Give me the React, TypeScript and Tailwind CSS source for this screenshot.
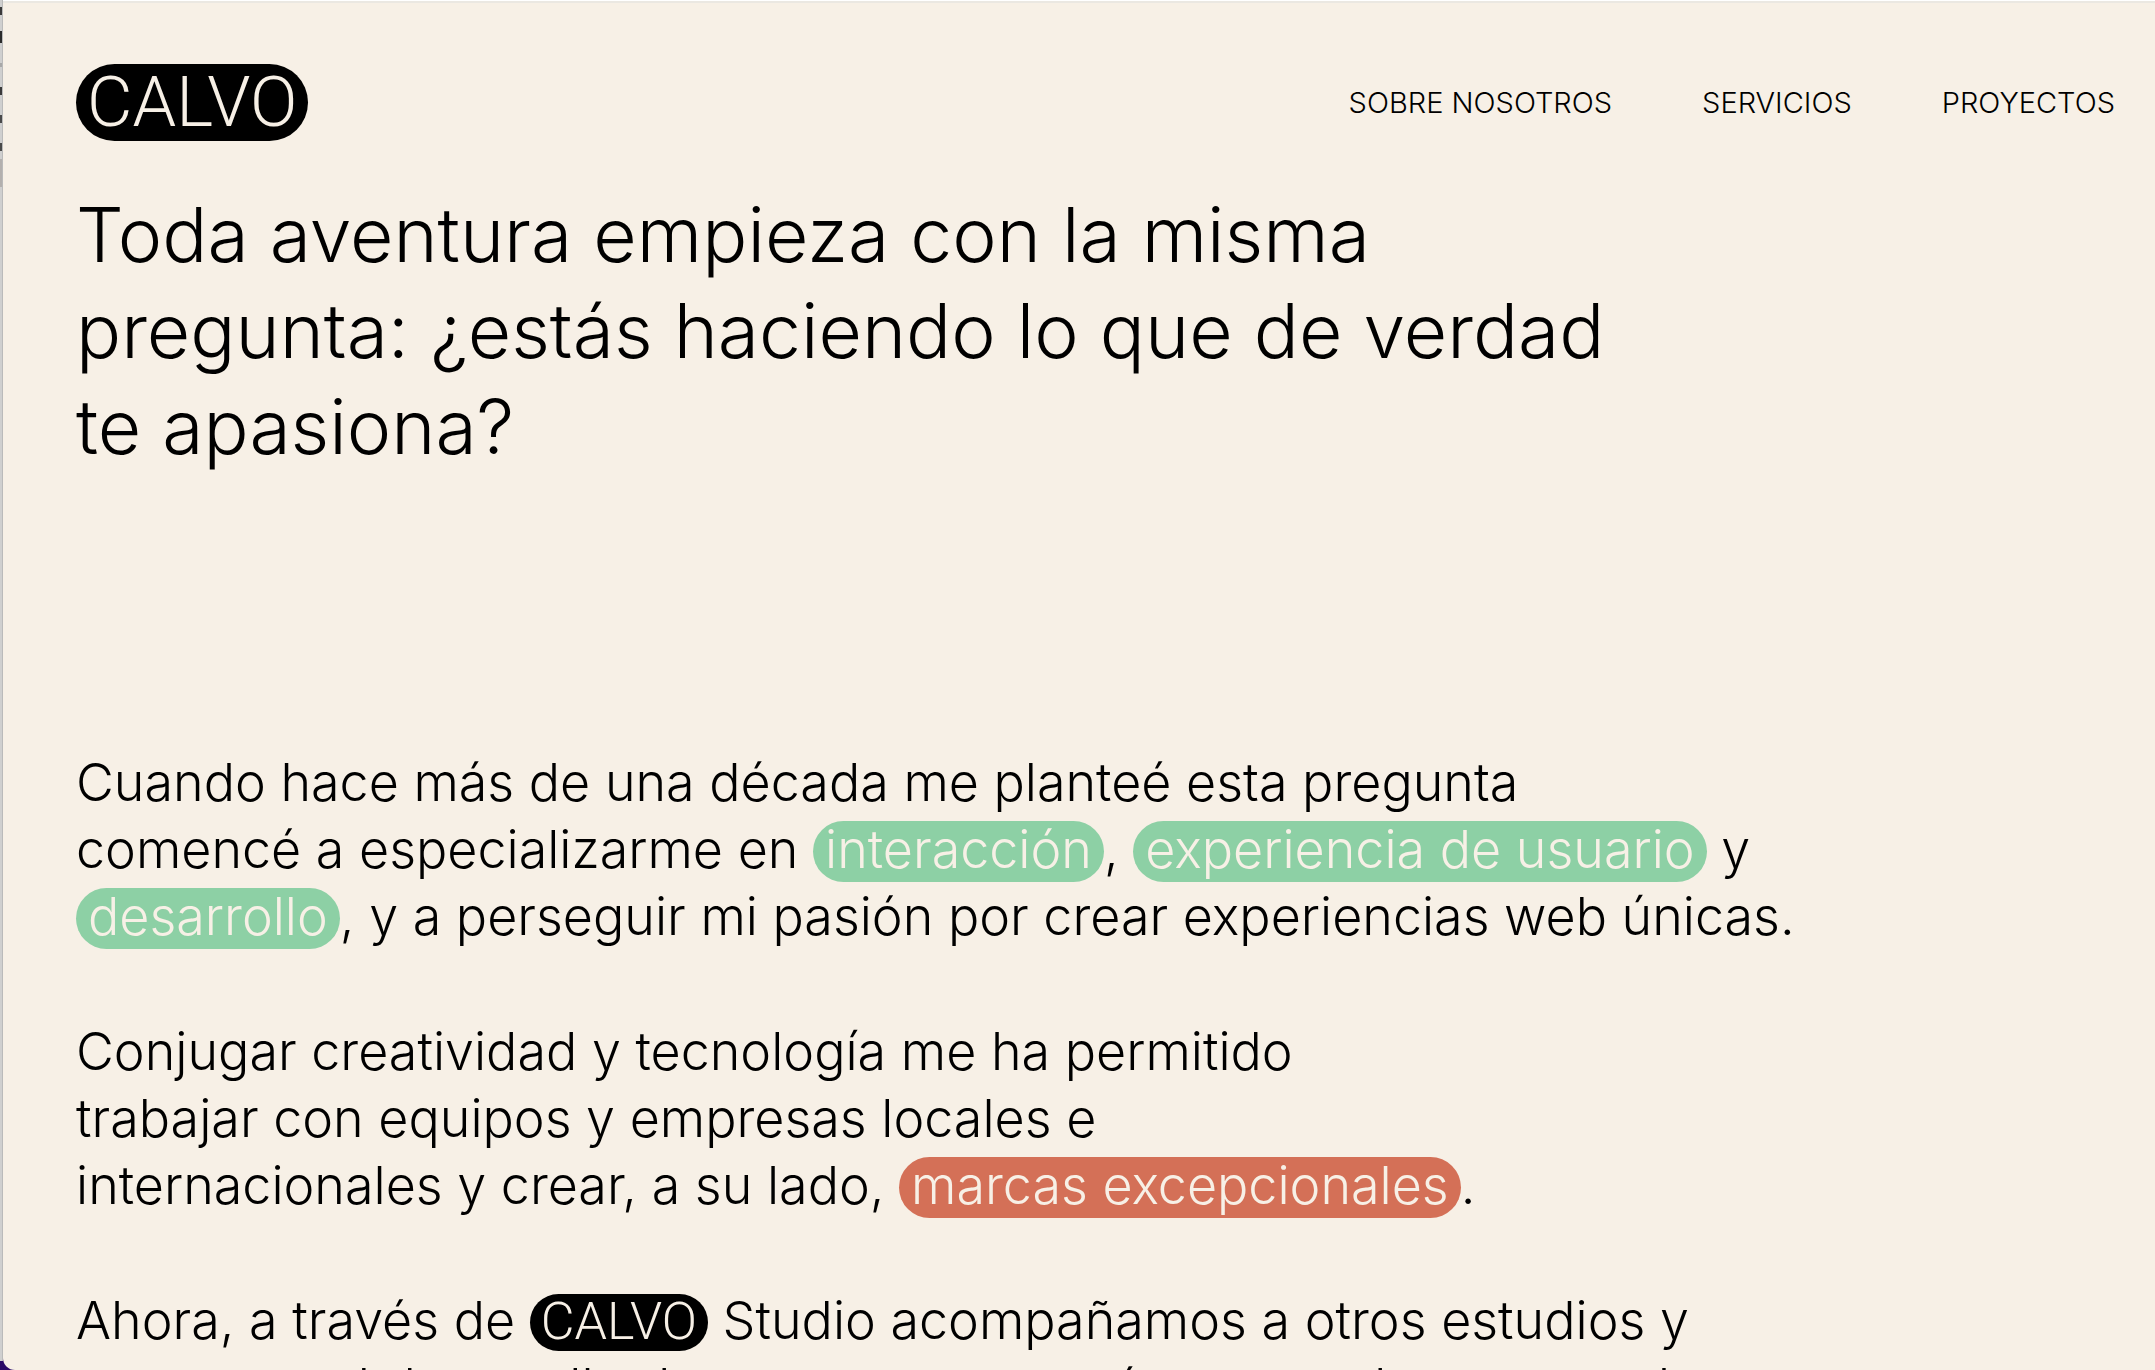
import type { ReactNode } from "react";

const links = [
  { label: "SOBRE NOSOTROS", href: "#sobre-nosotros" },
  { label: "SERVICIOS", href: "#servicios" },
  { label: "PROYECTOS", href: "#proyectos" },
];

function Pill({ className, children }: { className: string; children: ReactNode }) {
  return (
    <mark className={`inline-block rounded-full px-3 pb-[3px] leading-[58px] text-[#f7f0e6] ${className}`}>
      {children}
    </mark>
  );
}

// Sliver of the window that sits behind the page
function BackWindow() {
  return (
    <div aria-hidden="true" className="mb-[9px] flex w-[3px] shrink-0 flex-col border-r border-[#bababa] bg-[#cfcfcf]">
      <div className="mt-[7px] h-2 bg-[#3a3a3a]" />
      <div className="mt-4 h-3 bg-[#2b2b2b]" />
      <div className="mt-5 h-1 bg-[#a8a8a8]" />
      <div className="mt-5 h-2 bg-[#3a3a3a]" />
      <div className="mt-5 h-2 bg-[#4a4a4a]" />
      <div className="mt-5 h-2 bg-[#4a4a4a]" />
      <div className="mt-2 h-7 bg-[#b3b0ae]" />
    </div>
  );
}

export default function App() {
  return (
    <div className="flex h-screen overflow-hidden bg-[#2a0a66] font-['Inter',sans-serif] font-light text-black">
      <BackWindow />
      <div className="min-w-0 flex-1 overflow-hidden rounded-bl-xl border-t border-white bg-[#f7f0e6]">
        <div className="border-t-2 border-[#ebe8e2] pr-10 pl-[73px]">
          <header className="flex items-center justify-between pt-[61px]">
            <a
              href="#inicio"
              className="rounded-full bg-black px-[11px] font-['Roboto',sans-serif] text-[70px] leading-[77px] text-[#f7f0e6]"
            >
              CALVO
            </a>
            <nav className="flex gap-[90px] text-[29px]">
              {links.map((link) => (
                <a key={link.href} href={link.href}>
                  {link.label}
                </a>
              ))}
            </nav>
          </header>

          <main>
            <h1 className="mt-[46px] text-[75px] leading-[96px]">
              Toda aventura empieza con la misma
              <br />
              pregunta: ¿estás haciendo lo que de verdad
              <br />
              te apasiona?
            </h1>

            <div className="mt-[274px] space-y-[68px] text-[52px] leading-[67px]">
              <p>
                Cuando hace más de una década me planteé esta pregunta
                <br />
                comencé a especializarme en <Pill className="bg-[#8dd0a5]">interacción</Pill>,{" "}
                <Pill className="bg-[#8dd0a5]">experiencia de usuario</Pill> y
                <br />
                <Pill className="bg-[#8dd0a5]">desarrollo</Pill>, y a perseguir mi pasión por crear experiencias web
                únicas.
              </p>
              <p>
                Conjugar creatividad y tecnología me ha permitido
                <br />
                trabajar con equipos y empresas locales e
                <br />
                internacionales y crear, a su lado, <Pill className="bg-[#d47057]">marcas excepcionales</Pill>.
              </p>
              <p>
                Ahora, a través de{" "}
                <span className="inline-block rounded-full bg-black px-[11px] pb-[2px] font-['Roboto',sans-serif] leading-[55px] text-[#f7f0e6]">
                  CALVO
                </span>{" "}
                Studio acompañamos a otros estudios y
                <br />
                empresas el desarrollo de sus proyectos más avanzados y creando
              </p>
            </div>
          </main>
        </div>
      </div>
    </div>
  );
}
